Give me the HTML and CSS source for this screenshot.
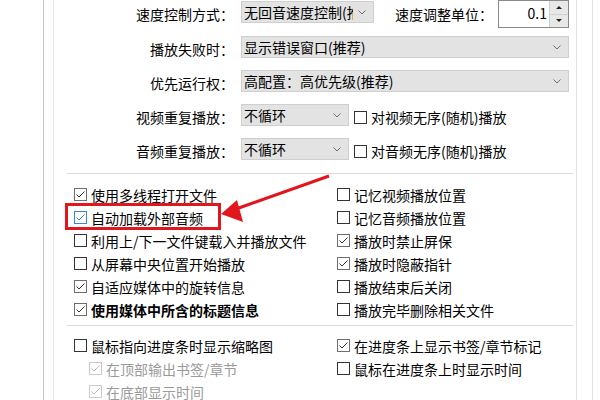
FILE: index.html
```html
<!DOCTYPE html>
<html lang="zh-CN">

<head>
    <meta charset="UTF-8" />
    <title>播放设置</title>
    <link rel="stylesheet" href="styles.css">
</head>

<body>
    <div class="frame">
        <div class="panel">
            <div class="form">
                <div class="row row-tall">
                    <span class="label">速度控制方式：</span>
                    <div class="select w-short"><span class="value">无回音速度控制(推荐)</span><svg class="chev" viewBox="0 0 8 5"><path d="M.5 .5 4 4 7.5 .5" /></svg></div>
                    <span class="label-inline">速度调整单位：</span>
                    <div class="spin">
                        <span class="spin-value">0.1</span>
                        <div class="spin-btns">
                            <span class="spin-btn"><i class="tri-up"></i></span>
                            <span class="spin-btn"><i class="tri-down"></i></span>
                        </div>
                    </div>
                </div>
                <div class="row">
                    <span class="label">播放失败时：</span>
                    <div class="select w-long"><span class="value">显示错误窗口(推荐)</span><svg class="chev" viewBox="0 0 8 5"><path d="M.5 .5 4 4 7.5 .5" /></svg></div>
                </div>
                <div class="row">
                    <span class="label">优先运行权：</span>
                    <div class="select w-long"><span class="value">高配置：高优先级(推荐)</span><svg class="chev" viewBox="0 0 8 5"><path d="M.5 .5 4 4 7.5 .5" /></svg></div>
                </div>
                <div class="row">
                    <span class="label">视频重复播放：</span>
                    <div class="select w-mini"><span class="value">不循环</span><svg class="chev" viewBox="0 0 8 5"><path d="M.5 .5 4 4 7.5 .5" /></svg></div>
                    <span class="opt"><svg class="box" viewBox="0 0 13 13"><rect x=".5" y=".5" width="12" height="12" class="off" /></svg>对视频无序(随机)播放</span>
                </div>
                <div class="row row-tall">
                    <span class="label">音频重复播放：</span>
                    <div class="select w-mini"><span class="value">不循环</span><svg class="chev" viewBox="0 0 8 5"><path d="M.5 .5 4 4 7.5 .5" /></svg></div>
                    <span class="opt"><svg class="box" viewBox="0 0 13 13"><rect x=".5" y=".5" width="12" height="12" class="off" /></svg>对音频无序(随机)播放</span>
                </div>
            </div>

            <div class="sep"></div>

            <div class="checks">
                <span class="chk"><svg class="box" viewBox="0 0 13 13"><rect x=".5" y=".5" width="12" height="12" class="on" /><path d="M2.5 6.5 5 9 10.5 3.5" /></svg>使用多线程打开文件</span>
                <span class="chk"><svg class="box" viewBox="0 0 13 13"><rect x=".5" y=".5" width="12" height="12" class="off" /></svg>记忆视频播放位置</span>
                <span class="chk"><svg class="box hot" viewBox="0 0 13 13"><rect x=".5" y=".5" width="12" height="12" /><path d="M2.5 6.5 5 9 10.5 3.5" /></svg>自动加载外部音频</span>
                <span class="chk"><svg class="box" viewBox="0 0 13 13"><rect x=".5" y=".5" width="12" height="12" class="off" /></svg>记忆音频播放位置</span>
                <span class="chk"><svg class="box" viewBox="0 0 13 13"><rect x=".5" y=".5" width="12" height="12" class="off" /></svg>利用上/下一文件键载入并播放文件</span>
                <span class="chk"><svg class="box" viewBox="0 0 13 13"><rect x=".5" y=".5" width="12" height="12" class="on" /><path d="M2.5 6.5 5 9 10.5 3.5" /></svg>播放时禁止屏保</span>
                <span class="chk"><svg class="box" viewBox="0 0 13 13"><rect x=".5" y=".5" width="12" height="12" class="off" /></svg>从屏幕中央位置开始播放</span>
                <span class="chk"><svg class="box" viewBox="0 0 13 13"><rect x=".5" y=".5" width="12" height="12" class="on" /><path d="M2.5 6.5 5 9 10.5 3.5" /></svg>播放时隐蔽指针</span>
                <span class="chk"><svg class="box" viewBox="0 0 13 13"><rect x=".5" y=".5" width="12" height="12" class="on" /><path d="M2.5 6.5 5 9 10.5 3.5" /></svg>自适应媒体中的旋转信息</span>
                <span class="chk"><svg class="box" viewBox="0 0 13 13"><rect x=".5" y=".5" width="12" height="12" class="off" /></svg>播放结束后关闭</span>
                <span class="chk bold"><svg class="box" viewBox="0 0 13 13"><rect x=".5" y=".5" width="12" height="12" class="on" /><path d="M2.5 6.5 5 9 10.5 3.5" /></svg>使用媒体中所含的标题信息</span>
                <span class="chk"><svg class="box" viewBox="0 0 13 13"><rect x=".5" y=".5" width="12" height="12" class="off" /></svg>播放完毕删除相关文件</span>
            </div>

            <div class="sep"></div>

            <div class="checks checks-bottom">
                <span class="chk"><svg class="box" viewBox="0 0 13 13"><rect x=".5" y=".5" width="12" height="12" class="off" /></svg>鼠标指向进度条时显示缩略图</span>
                <span class="chk"><svg class="box" viewBox="0 0 13 13"><rect x=".5" y=".5" width="12" height="12" class="on" /><path d="M2.5 6.5 5 9 10.5 3.5" /></svg>在进度条上显示书签/章节标记</span>
                <span class="chk indent disabled"><svg class="box" viewBox="0 0 13 13"><rect x=".5" y=".5" width="12" height="12" /><path d="M2.5 6.5 5 9 10.5 3.5" /></svg>在顶部输出书签/章节</span>
                <span class="chk"><svg class="box" viewBox="0 0 13 13"><rect x=".5" y=".5" width="12" height="12" class="off" /></svg>鼠标在进度条上时显示时间</span>
                <span class="chk indent disabled"><svg class="box" viewBox="0 0 13 13"><rect x=".5" y=".5" width="12" height="12" /><path d="M2.5 6.5 5 9 10.5 3.5" /></svg>在底部显示时间</span>
            </div>
        </div>
    </div>

    <!-- red highlight drawn over the dialog -->
    <svg class="annot" viewBox="0 0 600 400">
        <rect x="66.5" y="204.5" width="153" height="24" />
        <line x1="329" y1="176" x2="236" y2="209" />
        <polygon points="221,214 237,200 243,222" />
    </svg>
</body>

</html>
```

FILE: styles.css
```css
* {
    box-sizing: border-box
}

body {
    margin: 0;
    width: 600px;
    height: 400px;
    overflow: hidden;
    position: relative;
    background: #fff;
    color: #000;
    font-family: "Noto Sans CJK SC", "Noto Sans", sans-serif;
    font-size: 14px
}

.frame {
    margin-left: 43px;
    width: 550px;
    height: 400px;
    border-left: 1px solid #c6c6c6;
    border-right: 1px solid #e4e4e4
}

.panel {
    margin-left: 9px;
    width: 524px;
    height: 400px;
    border-left: 1px solid #e4e4e4;
    border-right: 1px solid #e4e4e4;
    padding: 0 3px 0 13px
}

.form {
    padding-top: 1px
}

.row {
    display: flex;
    align-items: flex-start;
    height: 34px
}

.row-tall {
    height: 35px
}

.label {
    width: 167px;
    margin-right: 7px;
    margin-top: 3px;
    text-align: right;
    line-height: 20px;
    white-space: nowrap
}

.select {
    height: 22px;
    display: flex;
    align-items: center;
    padding-left: 2px;
    background: #e3e3e3;
    border: 1px solid #cfcfcf
}

.select .value {
    flex: 1;
    overflow: hidden;
    white-space: nowrap;
    line-height: 20px
}

.chev {
    flex: none;
    width: 8px;
    height: 5px;
    margin: 0 7px 0 5px;
    fill: none;
    stroke: #707070;
    stroke-width: 1
}

.w-short {
    width: 133px
}

.w-long {
    width: 328px
}

.w-mini {
    width: 108px
}

.label-inline {
    width: 103px;
    margin-left: 21px;
    margin-top: 3px;
    line-height: 20px;
    white-space: nowrap
}

.spin {
    display: flex;
    width: 71px;
    height: 28px;
    margin-top: -1px;
    background: #fff;
    border: 1px solid #8a8a8a
}

.spin-value {
    flex: 1;
    text-align: right;
    padding-right: 2px;
    line-height: 24px
}

.spin-btns {
    width: 19px;
    display: flex;
    flex-direction: column;
    border-left: 1px solid #d0d0d0
}

.spin-btn {
    flex: 1;
    display: flex;
    align-items: center;
    justify-content: center;
    background: #e8e8e8
}

.spin-btn + .spin-btn {
    border-top: 1px solid #d0d0d0
}

.tri-up,
.tri-down {
    width: 0;
    height: 0;
    border-left: 3px solid transparent;
    border-right: 3px solid transparent
}

.tri-up {
    border-bottom: 3px solid #222
}

.tri-down {
    border-top: 3px solid #222
}

.opt {
    display: flex;
    align-items: center;
    margin-left: 5px;
    margin-top: 3px;
    line-height: 20px;
    white-space: nowrap
}

.sep {
    height: 1px;
    background: #d9d9d9
}

.checks {
    display: grid;
    grid-template-columns: 263px 1fr;
    padding: 9px 0 4px 7px
}

.checks-bottom {
    padding-top: 8px
}

.chk {
    display: flex;
    align-items: center;
    height: 23px;
    white-space: nowrap
}

.bold {
    font-weight: 700
}

.indent {
    padding-left: 15px
}

.box {
    flex: none;
    width: 13px;
    height: 13px;
    margin-right: 4px
}

.box rect {
    fill: #fff;
    stroke: #333
}

.box rect.on {
    stroke: #6e6e6e
}

.box path {
    fill: none;
    stroke: #333;
    stroke-width: 1
}

.box.hot rect,
.box.hot path {
    stroke: #3b86d6
}

.disabled {
    color: #9a9a9a
}

.disabled .box rect {
    stroke: #cccccc
}

.disabled .box path {
    stroke: #bdbdbd
}

.annot {
    position: absolute;
    left: 0;
    top: 0;
    width: 600px;
    height: 400px;
    pointer-events: none
}

.annot rect {
    fill: none;
    stroke: #e2161d;
    stroke-width: 3
}

.annot line {
    stroke: #e2161d;
    stroke-width: 3
}

.annot polygon {
    fill: #e2161d
}
```
